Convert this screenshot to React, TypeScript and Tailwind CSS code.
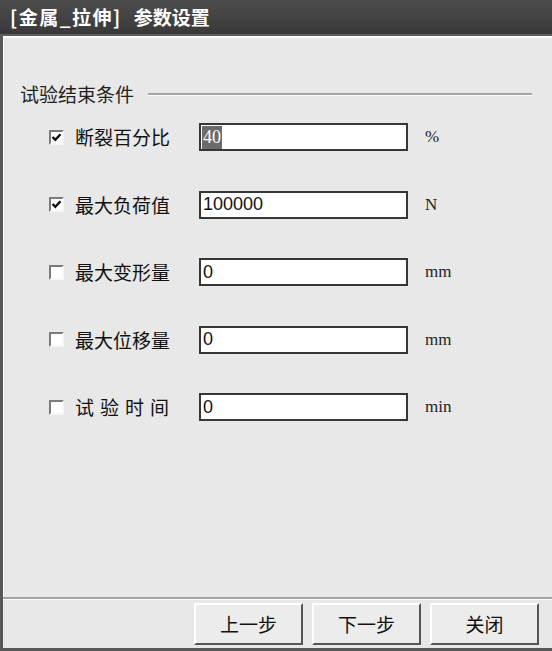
import React from 'react'

const cjk = { fontFamily: '"Noto Sans CJK SC", "Noto Sans", sans-serif' }
const serif = { fontFamily: '"Liberation Serif", "Times New Roman", serif' }

interface RowProps {
  checked: boolean
  label: string
  value: string
  unit: string
  selected?: boolean
  spaced?: boolean
}

function CheckBox({ checked }: { checked: boolean }) {
  return (
    <div className="w-[15px] h-[15px] border-2 border-t-[#7a7a7a] border-l-[#7a7a7a] border-b-[#f6f6f6] border-r-[#f6f6f6] bg-white flex items-center justify-center">
      {checked && (
        <svg width="11" height="11" viewBox="0 0 11 11">
          <path d="M1.5 5 L4.3 7.8 L9.5 2.2" fill="none" stroke="#111" strokeWidth="2.4" />
        </svg>
      )}
    </div>
  )
}

function Row({ checked, label, value, unit, selected, spaced }: RowProps) {
  return (
    <div className="flex items-center h-[28px]">
      <CheckBox checked={checked} />
      <div
        className={`ml-[11px] w-[124px] text-[19px] leading-[28px] text-[#111] ${spaced ? 'tracking-[6px]' : ''}`}
        style={cjk}
      >
        {label}
      </div>
      <div className="w-[209px] h-[28px] border-2 border-[#363636] bg-white flex items-center pl-[1px]">
        {selected ? (
          <span className="bg-[#6b6b6b] text-white text-[18px] leading-[23px] px-[1px]" style={serif}>
            {value}
          </span>
        ) : (
          <span
            className="text-[#111] text-[18px] leading-[23px] pl-[1px]"
            style={{ fontFamily: '"Liberation Sans", Arial, sans-serif' }}
          >
            {value}
          </span>
        )}
      </div>
      <div className="ml-[17px] text-[17px] text-[#222]" style={serif}>
        {unit}
      </div>
    </div>
  )
}

function Button({ children }: { children: React.ReactNode }) {
  return (
    <button
      className="w-[109px] h-[42px] bg-[#ececec] border-t-2 border-l-2 border-t-white border-l-white border-r-2 border-b-2 border-r-[#555] border-b-[#555] text-[19px] text-[#111] flex items-center justify-center"
      style={cjk}
    >
      {children}
    </button>
  )
}

export default function App() {
  const rows: RowProps[] = [
    { checked: true, label: '断裂百分比', value: '40', unit: '%', selected: true },
    { checked: true, label: '最大负荷值', value: '100000', unit: 'N' },
    { checked: false, label: '最大变形量', value: '0', unit: 'mm' },
    { checked: false, label: '最大位移量', value: '0', unit: 'mm' },
    { checked: false, label: '试验时间', value: '0', unit: 'min', spaced: true },
  ]

  return (
    <div className="w-[552px] h-[651px] flex flex-col bg-[#e8e8e8] overflow-hidden">
      <div className="h-[36px] shrink-0 bg-gradient-to-b from-[#4d4d4d] to-[#393939] border-b-2 border-[#5e5e5e] flex items-center pl-[10px] gap-[12px]">
        <span className="text-white font-bold text-[19px] tracking-[1.5px]" style={cjk}>
          [金属_拉伸]
        </span>
        <span className="text-white font-bold text-[19px]" style={cjk}>
          参数设置
        </span>
      </div>

      <div className="flex-1 flex flex-col border-l-[3px] border-[#585858]">
        <div className="flex-1 flex flex-col border-t-2 border-l border-white pl-[16px] pr-[20px]">
          <div className="mt-[44px] h-[24px] flex items-center">
            <span className="text-[19px] text-[#222] leading-[24px]" style={cjk}>
              试验结束条件
            </span>
            <div className="flex-1 ml-[14px] border-t-2 border-[#a4a4a4] border-b border-b-white" />
          </div>

          <div className="mt-[17px] pl-[29px] flex flex-col gap-[39.5px]">
            {rows.map((r) => (
              <Row key={r.label} {...r} />
            ))}
          </div>
        </div>

        <div className="border-t-2 border-[#a4a4a4]">
          <div className="border-t border-white pt-[3px] pb-[3px] pr-[13px] flex justify-end gap-[9px]">
            <Button>上一步</Button>
            <Button>下一步</Button>
            <Button>关闭</Button>
          </div>
        </div>
      </div>

      <div className="h-[3px] shrink-0 bg-[#585858]" />
    </div>
  )
}
